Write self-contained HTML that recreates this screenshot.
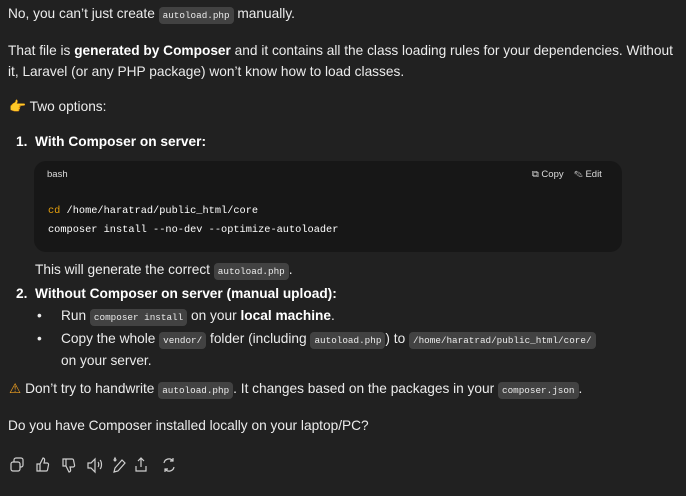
<!DOCTYPE html>
<html><head><style>
body{margin:0;background:#212121;width:686px;height:496px;overflow:hidden;font-family:"Liberation Sans",sans-serif;font-size:13.7px;color:#ececec;position:relative}
.l{position:absolute;white-space:nowrap;line-height:18px}
b{font-weight:bold;color:#fff}
code{font-family:"Liberation Mono",monospace;font-size:9.3px;background:#424242;border-radius:4px;padding:3px 4px;color:#ececec}
.cb{position:absolute;left:34px;top:161px;width:588px;height:91px;background:#171717;border-radius:12px}
.mono{font-family:"Liberation Mono",monospace;font-size:10.3px;color:#fff}
</style></head><body>
<div class="l" style="left:8px;top:5px">No, you can’t just create <code>autoload.php</code> manually.</div>
<div class="l" style="left:8px;top:42px">That file is <b>generated by Composer</b> and it contains all the class loading rules for your dependencies. Without</div>
<div class="l" style="left:8px;top:63px">it, Laravel (or any PHP package) won’t know how to load classes.</div>
<div class="l" style="left:9px;top:98px"><span style="color:#f5c542">👉</span> Two options:</div>
<div class="l" style="left:16px;top:133px"><b>1.&nbsp; With Composer on server:</b></div>
<div class="cb">
 <div class="l" style="left:13px;top:5px;font-size:9.5px;color:#ddd">bash</div>
 <div class="l" style="left:498px;top:5px;font-size:9.5px;color:#ddd">⧉ Copy &nbsp;&nbsp; ✎ Edit</div>
 <div class="l mono" style="left:14px;top:41px"><span style="color:#e5a00d">cd</span> /home/haratrad/public_html/core</div>
 <div class="l mono" style="left:14px;top:60px">composer install --no-dev --optimize-autoloader</div>
</div>
<div class="l" style="left:35px;top:261px">This will generate the correct <code>autoload.php</code>.</div>
<div class="l" style="left:16px;top:285px"><b>2.&nbsp; Without Composer on server (manual upload):</b></div>
<div class="l" style="left:37px;top:307px">•</div>
<div class="l" style="left:61px;top:307px">Run <code>composer install</code> on your <b>local machine</b>.</div>
<div class="l" style="left:37px;top:330px">•</div>
<div class="l" style="left:61px;top:330px">Copy the whole <code>vendor/</code> folder (including <code>autoload.php</code>) to <code>/home/haratrad/public_html/core/</code></div>
<div class="l" style="left:61px;top:352px">on your server.</div>
<div class="l" style="left:9px;top:380px"><span style="color:#f0a020">⚠</span> Don’t try to handwrite <code>autoload.php</code>. It changes based on the packages in your <code>composer.json</code>.</div>
<div class="l" style="left:8px;top:417px">Do you have Composer installed locally on your laptop/PC?</div>
<svg style="position:absolute;left:0;top:450px" width="200" height="30" fill="none" stroke="#cfcfcf" stroke-width="1.2">
<rect x="11" y="12" width="9" height="9" rx="2"/><path d="M14 12v-2a2 2 0 0 1 2-2h5a2 2 0 0 1 2 2v5a2 2 0 0 1-2 2h-1"/>
<path d="M37 14h3v7h-3zM40 14l3-6c1 0 2 1 1.5 3l-.5 2h3a1.5 1.5 0 0 1 1.5 2l-1 5a1.5 1.5 0 0 1-1.5 1H40"/>
<path d="M63 9h3v7h-3zM66 16l3 6c1 0 2-1 1.5-3l-.5-2h3a1.5 1.5 0 0 0 1.5-2l-1-5a1.5 1.5 0 0 0-1.5-1H66"/>
<path d="M88 13h3l4-4v13l-4-4h-3zM98 12c1 1 1 4 0 5M100 10c2 2 2 7 0 9"/>
<path d="M114 22l1-4 7-8 3 3-7 8zM114 10l1-2 1 2-1 1z"/>
<path d="M144 11l-3-3-3 3M141 8v9M136 16v5h10v-5"/>
<path d="M164 13a5 5 0 0 1 9-2M173 8v3h-3M174 17a5 5 0 0 1-9 2M165 22v-3h3"/>
</svg>
</body></html>
